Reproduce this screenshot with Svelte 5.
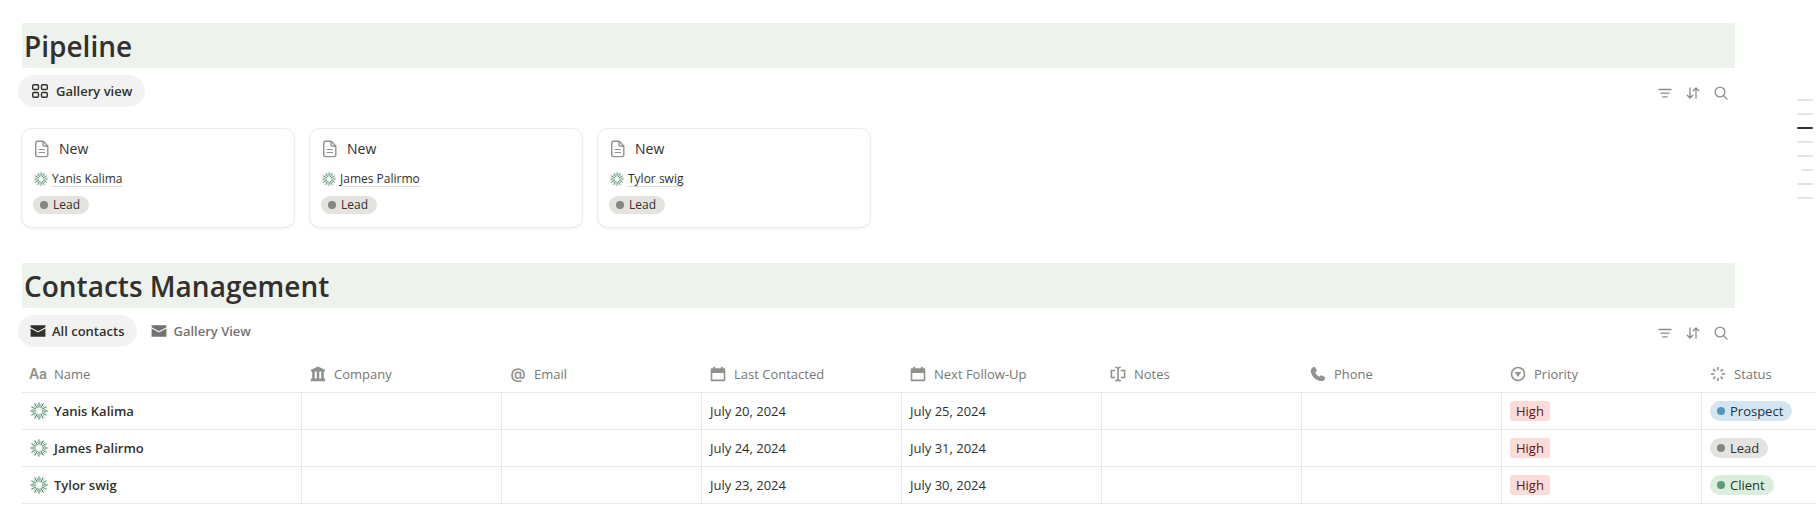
<script>
  const cards = ['Yanis Kalima', 'James Palirmo', 'Tylor swig'];

  const columns = [
    { label: 'Name', icon: 'title' },
    { label: 'Company', icon: 'bank' },
    { label: 'Email', icon: 'at' },
    { label: 'Last Contacted', icon: 'calendar' },
    { label: 'Next Follow-Up', icon: 'calendar' },
    { label: 'Notes', icon: 'notes' },
    { label: 'Phone', icon: 'phone' },
    { label: 'Priority', icon: 'select' },
    { label: 'Status', icon: 'status' }
  ];

  const contacts = [
    { name: 'Yanis Kalima', last: 'July 20, 2024', next: 'July 25, 2024', priority: 'High', status: 'Prospect', tone: 'blue' },
    { name: 'James Palirmo', last: 'July 24, 2024', next: 'July 31, 2024', priority: 'High', status: 'Lead', tone: 'gray' },
    { name: 'Tylor swig', last: 'July 23, 2024', next: 'July 30, 2024', priority: 'High', status: 'Client', tone: 'green' }
  ];

  const outline = ['', '', 'current', '', '', 'short', '', ''];
  const rays = Array.from({ length: 12 }, (_, i) => i * 30);
  const spokes = Array.from({ length: 8 }, (_, i) => i * 45);
</script>

{#snippet burst(size)}
  <svg class="burst" width={size} height={size} viewBox="0 0 16 16" aria-hidden="true">
    {#each rays as angle}
      <line x1="8" y1="5.2" x2="8" y2="0.2" transform="rotate({angle} 8 8)" />
      <line class="inner" x1="8" y1="3.8" x2="8" y2="1.2" transform="rotate({angle + 15} 8 8)" />
    {/each}
  </svg>
{/snippet}

{#snippet envelope()}
  <svg width="16" height="16" viewBox="0 0 16 16" fill="currentColor" aria-hidden="true">
    <path d="M.6 2.3h14.8v1.9L8 8.2.6 4.2z" />
    <path d="M.6 5.6 8 9.6l7.4-4v8.1H.6z" />
  </svg>
{/snippet}

{#snippet tools()}
  <div class="tools">
    <button aria-label="Filter">
      <svg width="16" height="16" viewBox="0 0 16 16" aria-hidden="true">
        <path d="M2 4.5h12M4 8.2h8M5.8 11.8h4.4" />
      </svg>
    </button>
    <button aria-label="Sort">
      <svg width="16" height="16" viewBox="0 0 16 16" aria-hidden="true">
        <path d="M5 2.8v10M2.2 10.2 5 13l2.8-2.8M11 13.2v-10M8.2 5.8 11 3l2.8 2.8" />
      </svg>
    </button>
    <button aria-label="Search">
      <svg width="16" height="16" viewBox="0 0 16 16" aria-hidden="true">
        <circle cx="7" cy="7" r="4.9" />
        <path d="m10.5 10.5 3.6 3.6" />
      </svg>
    </button>
  </div>
{/snippet}

{#snippet status(label, tone)}
  <span class="status {tone}"><i></i>{label}</span>
{/snippet}

{#snippet columnIcon(kind)}
  {#if kind === 'title'}
    <span class="letter" aria-hidden="true">Aa</span>
  {:else if kind === 'at'}
    <span class="letter at" aria-hidden="true">@</span>
  {:else}
    <svg width="16" height="16" viewBox="0 0 16 16" aria-hidden="true">
      {#if kind === 'bank'}
        <path class="solid" d="M8 .6 15 3.7v1.8H1V3.7zM2.2 5h2.6v8H2.2zM6.7 5h2.6v8H6.7zM11.2 5h2.6v8h-2.6zM.8 12.6h14.4v2.6H.8z" />
      {:else if kind === 'calendar'}
        <path class="solid" fill-rule="evenodd" d="M3.2.8h2v1.5h5.6V.8h2v1.5h1.6q.9 0 .9.9v11.1q0 .9-.9.9H1.6q-.9 0-.9-.9V3.2q0-.9.9-.9h1.6zM2.3 7v6.6h11.4V7z" />
      {:else if kind === 'notes'}
        <path class="line" d="M5.2 4.5H1.4v7h3.8M10.8 4.5h3.8v7h-3.8M5.2 1.2Q8 1.2 8 3v10q0 1.8-2.8 1.8M10.8 1.2Q8 1.2 8 3M8 13q0 1.8 2.8 1.8" />
      {:else if kind === 'phone'}
        <path class="solid" d="M3.8.9c.5-.2.9 0 1.2.4l1.6 2.8c.3.5.2.9-.2 1.3L5.2 6.6c.9 1.9 2.3 3.3 4.2 4.2l1.2-1.2c.4-.4.8-.5 1.3-.2l2.8 1.6c.4.3.6.7.4 1.2-.5 2-2 3.1-4.1 2.9C5.6 14.5 1.2 10.1.8 5 .7 2.9 1.8 1.4 3.8.9z" />
      {:else if kind === 'select'}
        <circle class="line" cx="8" cy="8" r="6.5" />
        <path class="solid" d="M4.700 6h6.600L8 11z" />
      {:else}
        {#each spokes as angle}
          <path class="line" d="M8 1v3.3" transform="rotate({angle} 8 8)" />
        {/each}
      {/if}
    </svg>
  {/if}
{/snippet}

<main>
  <section>
    <h2>Pipeline</h2>
    <div class="bar">
      <div class="tabs">
        <button class="tab wide active">
          <svg width="18" height="16" viewBox="0 0 18 16" fill="none" stroke="currentColor" stroke-width="1.4" aria-hidden="true">
            <rect x="1.7" y="1.7" width="5.8" height="4.8" rx="1.2" />
            <rect x="10.5" y="1.7" width="5.8" height="4.8" rx="1.2" />
            <rect x="1.7" y="9.5" width="5.8" height="4.8" rx="1.2" />
            <rect x="10.5" y="9.5" width="5.8" height="4.8" rx="1.2" />
          </svg>
          Gallery view
        </button>
      </div>
      {@render tools()}
    </div>
    <div class="cards">
      {#each cards as person}
        <article>
          <h3>
            <svg width="16" height="18" viewBox="0 0 16 18" aria-hidden="true">
              <path class="page" d="M3.7 1.2h5.5l4.6 4.9v8.5q0 2-2 2H3.7q-2 0-2-2V3.2q0-2 2-2z" />
              <path class="page" d="M9 1.4v3.2q0 1.7 1.7 1.7h3" />
              <path class="rule" d="M4.7 9.5h6.2M4.7 12.5h6.2" />
            </svg>
            New
          </h3>
          <div class="person">{@render burst(14)}<a href="#contacts">{person}</a></div>
          <div class="small">{@render status('Lead', 'gray')}</div>
        </article>
      {/each}
    </div>
  </section>

  <section id="contacts">
    <h2>Contacts Management</h2>
    <div class="bar">
      <div class="tabs">
        <button class="tab active">{@render envelope()}All contacts</button>
        <button class="tab">{@render envelope()}Gallery View</button>
      </div>
      {@render tools()}
    </div>
  </section>

  <div class="scroller">
    <table>
      <thead>
        <tr>
          {#each columns as column}
            <th scope="col"><div class="head">{@render columnIcon(column.icon)}{column.label}</div></th>
          {/each}
        </tr>
      </thead>
      <tbody>
        {#each contacts as row}
          <tr>
            <td><div class="name">{@render burst(18)}{row.name}</div></td>
            <td></td>
            <td></td>
            <td>{row.last}</td>
            <td>{row.next}</td>
            <td></td>
            <td></td>
            <td><div class="value"><span class="tag">{row.priority}</span></div></td>
            <td><div class="value">{@render status(row.status, row.tone)}</div></td>
          </tr>
        {/each}
      </tbody>
    </table>
  </div>

  <nav class="outline" aria-label="Page outline">
    {#each outline as kind}
      <span class={kind}></span>
    {/each}
  </nav>
</main>

<style>
  :global(body) {
    margin: 0;
    background: #fff;
  }

  main {
    position: relative;
    padding: 23px 0 24px 22px;
    overflow: hidden;
    color: #32302c;
    font-family: 'Segoe UI', 'Open Sans', 'Noto Sans', sans-serif;
    font-size: 13px;
    line-height: 20px;
  }

  section {
    margin-right: 81px;
  }

  h2 {
    margin: 0;
    padding: 1px 2px 0;
    background: #edf2ec;
    font-size: 28px;
    font-weight: 600;
    line-height: 44px;
  }

  button {
    border: 0;
    background: none;
    font: inherit;
    cursor: pointer;
  }

  .bar {
    display: flex;
    justify-content: space-between;
    align-items: center;
    margin: 7px 0 0 -4px;
  }

  .tabs {
    display: flex;
    gap: 2px;
  }

  .tab {
    display: flex;
    align-items: center;
    gap: 6px;
    height: 32px;
    padding: 0 13px 0 12px;
    border-radius: 16px;
    color: #73726e;
    font-weight: 600;
  }

  .tab.wide {
    gap: 7px;
    padding: 0 13px;
  }

  .tab.active {
    background: #f2f2f2;
    color: #32302c;
  }

  .tools {
    display: flex;
    gap: 12px;
    padding: 4px 6px 0 0;
  }

  .tools button {
    display: flex;
    padding: 0;
  }

  .tools svg {
    fill: none;
    stroke: #8e8d8a;
    stroke-width: 1.3;
    stroke-linecap: round;
    stroke-linejoin: round;
  }

  .cards {
    display: grid;
    grid-template-columns: repeat(auto-fill, 272px);
    gap: 16px;
    margin: 22px 0 36px;
  }

  article {
    padding: 9px 10px 13px;
    border-radius: 10px;
    box-shadow: 0 0 0 1px #ececeb, 0 2px 4px rgba(0, 0, 0, 0.06);
  }

  h3 {
    display: flex;
    align-items: center;
    gap: 9px;
    margin: 0;
    padding-left: 2px;
    font-size: 14px;
    font-weight: 500;
    line-height: 22px;
  }

  .page,
  .rule {
    fill: none;
    stroke: #91918e;
    stroke-width: 1.4;
  }

  .rule {
    stroke-width: 1;
  }

  .person {
    display: flex;
    align-items: center;
    gap: 4px;
    height: 16px;
    margin-top: 11px;
    padding-left: 2px;
    font-size: 12px;
    line-height: 15px;
  }

  .person a {
    border-bottom: 1px solid #d9d9d7;
    color: inherit;
    font-weight: 500;
    text-decoration: none;
  }

  .burst {
    flex: none;
    stroke: #448361;
    stroke-width: 0.9;
  }

  .burst .inner {
    stroke-width: 0.4;
  }

  .status {
    display: inline-flex;
    align-items: center;
    gap: 5px;
    height: 20px;
    padding: 0 9px 0 7px;
    border-radius: 10px;
  }

  .status i {
    width: 8px;
    height: 8px;
    border-radius: 50%;
  }

  .small {
    display: flex;
    margin-top: 9px;
    padding-left: 1px;
  }

  .small .status {
    height: 18px;
    font-size: 12px;
  }

  .gray {
    background: #e4e3e0;
    color: #32302c;
  }

  .gray i {
    background: #868582;
  }

  .blue {
    background: #d3e5f1;
    color: #183347;
  }

  .blue i {
    background: #5294bd;
  }

  .green {
    background: #dbeddb;
    color: #1c3829;
  }

  .green i {
    background: #5f9b76;
  }

  .scroller {
    padding-top: 9px;
    overflow: hidden;
  }

  table {
    width: 1880px;
    table-layout: fixed;
    border-collapse: separate;
    border-spacing: 0;
  }

  th,
  td {
    box-sizing: border-box;
    height: 37px;
    padding: 0 8px;
    border-bottom: 1px solid #e9e9e7;
    text-align: left;
    vertical-align: middle;
    font-weight: 400;
    white-space: nowrap;
  }

  th {
    width: 200px;
  }

  th:first-child {
    width: 280px;
  }

  td {
    border-right: 1px solid #e9e9e7;
  }

  .head,
  .name,
  .value {
    display: flex;
    align-items: center;
  }

  .head {
    gap: 8px;
    color: #787774;
  }

  .head svg {
    flex: none;
  }

  .solid {
    fill: #91918e;
  }

  .line {
    fill: none;
    stroke: #91918e;
    stroke-width: 1.6;
  }

  .letter {
    display: flex;
    justify-content: center;
    width: 16px;
    color: #91918e;
    font-family: Inter, sans-serif;
    font-size: 14px;
    font-weight: 600;
  }

  .letter.at {
    font-size: 15px;
  }

  .name {
    gap: 6px;
    font-weight: 600;
  }

  .tag {
    padding: 0 6px;
    border-radius: 3px;
    background: #fbdcd9;
    color: #5d1715;
  }

  .outline {
    position: absolute;
    top: 99px;
    right: 3px;
    display: flex;
    flex-direction: column;
    align-items: flex-end;
    gap: 12px;
  }

  .outline span {
    width: 16px;
    height: 2px;
    border-radius: 1px;
    background: #e4e3df;
  }

  .outline .short {
    width: 12px;
  }

  .outline .current {
    background: #32302c;
  }
</style>
